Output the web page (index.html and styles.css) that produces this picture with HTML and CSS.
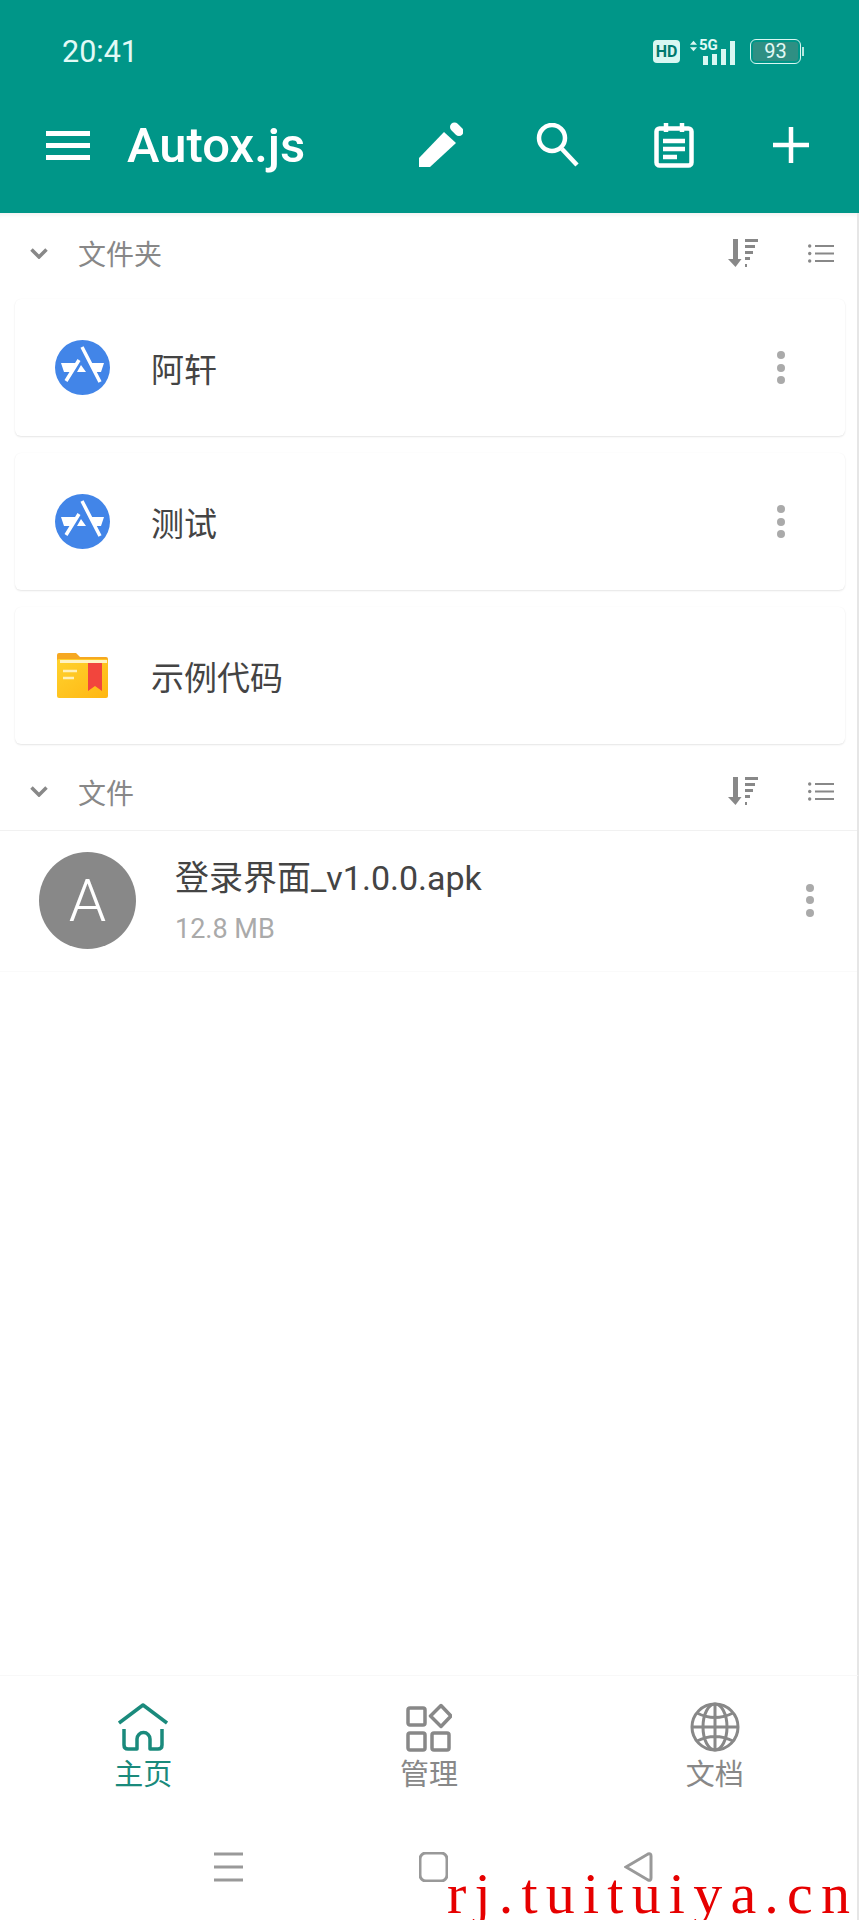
FILE: index.html
```html
<!DOCTYPE html>
<html lang="zh-CN">
<head>
  <meta charset="UTF-8" />
  <title>Autox.js</title>
  <link rel="stylesheet" href="styles.css">
</head>
<body>
  <div class="app">
    <header class="appbar">
      <div class="statusbar">
        <span class="clock">20:41</span>
        <div class="status-icons">
          <span class="hd">HD</span>
          <span class="signal">
            <svg class="updown" viewBox="0 0 8 12"><path d="M4 0 8 4.5H0zM4 12 0 7.5h8z"/></svg>
            <span class="five-g">5G</span>
            <span class="bars"><i class="b1"></i><i class="b2"></i><i class="b3"></i><i class="b4"></i></span>
          </span>
          <span class="battery"><span class="battery-level">93</span></span>
          <span class="battery-tip"></span>
        </div>
      </div>
      <div class="toolbar">
        <svg class="menu-icon" viewBox="0 0 44 29"><path d="M0 2.5h44M0 14.5h44M0 26.500h44"/></svg>
        <h1 class="title">Autox.js</h1>
        <div class="actions">
          <button class="action">
            <svg width="44" height="46" viewBox="0 0 44 46"><path class="fill" d="M0 36 25 10 37 21 11 45H0z"/><path class="cap" d="M35.500 5 40 9.500"/></svg>
          </button>
          <button class="action">
            <svg width="44" height="44" viewBox="0 0 44 44"><circle cx="16" cy="15" r="13"/><path d="M26 26 41 42"/></svg>
          </button>
          <button class="action">
            <svg width="40" height="46" viewBox="0 0 40 46"><rect x="2.500" y="6.500" width="35" height="37" rx="3"/><path d="M12 1v9M28 1v9M9 19h22M9 27h22M9 35h14"/></svg>
          </button>
          <button class="action">
            <svg width="36" height="36" viewBox="0 0 36 36"><path d="M18 0v36M0 18h36"/></svg>
          </button>
        </div>
      </div>
    </header>

    <main class="content">
      <div class="section-head">
        <svg class="chevron" viewBox="0 0 18 11"><path d="M1.500 1.500 9 9l7.500-7.500"/></svg>
        <span class="section-name">文件夹</span>
        <svg class="sort-icon" viewBox="0 0 30 29"><path d="M5 0h5v20h3.500L7.500 28 0 20h5z"/><path d="M17 1.500h13M17 7.500h10M17 13.500h8M17 19.500h5M17 26.500h2"/></svg>
        <svg class="list-icon" viewBox="0 0 26 19"><circle cx="1.700" cy="2" r="1.700"/><circle cx="1.700" cy="9.500" r="1.700"/><circle cx="1.700" cy="17" r="1.700"/><path d="M7 2h19M7 9.500h19M7 17h19"/></svg>
      </div>

      <div class="cards">
        <div class="card">
          <svg class="card-icon" viewBox="0 0 55 55">
            <circle class="app-disc" cx="27.500" cy="27.500" r="27.500"/>
            <path class="app-band" d="M6 23h15l-5 9H9zM34 23h15l-3 9H39zM26 25l5 7h-9z"/>
            <path class="app-stroke" d="M27 7 45 42M24 20 11 41"/>
          </svg>
          <span class="card-name">阿轩</span>
          <span class="more"><i></i><i></i><i></i></span>
        </div>
        <div class="card">
          <svg class="card-icon" viewBox="0 0 55 55">
            <circle class="app-disc" cx="27.500" cy="27.500" r="27.500"/>
            <path class="app-band" d="M6 23h15l-5 9H9zM34 23h15l-3 9H39zM26 25l5 7h-9z"/>
            <path class="app-stroke" d="M27 7 45 42M24 20 11 41"/>
          </svg>
          <span class="card-name">测试</span>
          <span class="more"><i></i><i></i><i></i></span>
        </div>
        <div class="card">
          <svg class="card-icon" viewBox="0 0 55 55">
            <defs>
              <linearGradient id="folder-body" x1="0" y1="0" x2="1" y2="1">
                <stop offset="0" stop-color="#ffd22e"/>
                <stop offset="1" stop-color="#ffb612"/>
              </linearGradient>
            </defs>
            <path d="M2 7q0-2 2-2h17l4 4h26q2 0 2 2v8H2z" fill="#f6a821"/>
            <rect x="2" y="11" width="51" height="39" rx="2" fill="url(#folder-body)"/>
            <rect x="5" y="12" width="47" height="3" fill="#fff3c4"/>
            <path d="M33 15h14v28l-7-5-7 5z" fill="#f2453d"/>
            <path d="M8 23h14M8 30h11" stroke="#fff0b8" stroke-width="2.500"/>
          </svg>
          <span class="card-name">示例代码</span>
        </div>
      </div>

      <div class="section-head section-head-files">
        <svg class="chevron" viewBox="0 0 18 11"><path d="M1.500 1.500 9 9l7.500-7.500"/></svg>
        <span class="section-name">文件</span>
        <svg class="sort-icon" viewBox="0 0 30 29"><path d="M5 0h5v20h3.500L7.500 28 0 20h5z"/><path d="M17 1.500h13M17 7.500h10M17 13.500h8M17 19.500h5M17 26.500h2"/></svg>
        <svg class="list-icon" viewBox="0 0 26 19"><circle cx="1.700" cy="2" r="1.700"/><circle cx="1.700" cy="9.500" r="1.700"/><circle cx="1.700" cy="17" r="1.700"/><path d="M7 2h19M7 9.500h19M7 17h19"/></svg>
      </div>

      <div class="file-row">
        <div class="avatar">A</div>
        <div class="file-info">
          <div class="file-name">登录界面_v1.0.0.apk</div>
          <div class="file-size">12.8 MB</div>
        </div>
        <span class="more"><i></i><i></i><i></i></span>
      </div>
    </main>

    <nav class="tabs">
      <div class="tab tab-active">
        <svg class="tab-icon" width="50" height="48" viewBox="0 0 50 48"><path d="M1 20 25 2l24 18M6 26v16q0 4 4 4h9V36a6.500 6.500 0 0 1 13 0v10h8q4 0 4-4V26"/></svg>
        <span class="tab-label">主页</span>
      </div>
      <div class="tab">
        <svg class="tab-icon" width="46" height="48" viewBox="0 0 46 48"><rect x="2" y="5" width="17" height="17" rx="2"/><rect x="2" y="30" width="17" height="17" rx="2"/><rect x="26" y="30" width="17" height="17" rx="2"/><path d="M35 2.500 45 13 35 23.500 24.500 13z"/></svg>
        <span class="tab-label">管理</span>
      </div>
      <div class="tab">
        <svg class="tab-icon globe" width="50" height="50" viewBox="0 0 50 50"><circle cx="25" cy="25" r="23"/><ellipse cx="25" cy="25" rx="12" ry="23"/><path d="M25 2v46M2 25h46M7 11q18 9 36 0M7 39q18-9 36 0"/></svg>
        <span class="tab-label">文档</span>
      </div>
    </nav>

    <div class="navkeys">
      <svg class="key" width="29" height="30" viewBox="0 0 29 30"><path d="M0 2h29M0 15h29M0 28h29"/></svg>
      <svg class="key" width="29" height="30" viewBox="0 0 29 30"><rect x="1" y="1" width="27" height="28" rx="6"/></svg>
      <svg class="key" width="29" height="30" viewBox="0 0 29 30"><path d="M2 15 24 2q3-1 3 2v22q0 3-3 2z"/></svg>
    </div>

    <div class="watermark">rj.tuituiya.cn</div>
  </div>
</body>
</html>
```

FILE: styles.css
```css
*, *::before, *::after {
  box-sizing: border-box;
}

html, body {
  margin: 0;
  padding: 0;
  background: #fff;
}

.app {
  position: relative;
  display: flex;
  flex-direction: column;
  width: 859px;
  height: 1920px;
  overflow: hidden;
  font-family: Roboto, "Noto Sans CJK SC", sans-serif;
  color: #444;
}

/* top bar */
.appbar {
  background: #009688;
  height: 213px;
  color: #fff;
}

.statusbar {
  display: flex;
  align-items: center;
  justify-content: space-between;
  height: 103px;
  padding: 0 55px 0 62px;
  color: #e2faf6;
}

.clock {
  font-size: 30.500px;
}

.status-icons {
  display: flex;
  align-items: center;
}

.hd {
  width: 27px;
  height: 23px;
  border-radius: 4px;
  background: #d9f7f2;
  color: #00796e;
  font-size: 16px;
  font-weight: 700;
  line-height: 23px;
  text-align: center;
}

.signal {
  position: relative;
  display: block;
  width: 48px;
  height: 26px;
  margin: 0 12px 0 10px;
}

.updown {
  position: absolute;
  left: 0;
  top: 1px;
  width: 7px;
  height: 12px;
  fill: #d9f7f2;
}

.five-g {
  position: absolute;
  left: 9px;
  top: -1px;
  font-size: 15px;
  font-weight: 700;
  line-height: 14px;
}

.bars {
  position: absolute;
  left: 13px;
  bottom: 0;
  display: flex;
  align-items: flex-end;
  gap: 4px;
}

.bars i {
  display: block;
  width: 5px;
  background: #d9f7f2;
}

.bars .b1 { height: 9px; }
.bars .b2 { height: 11px; }
.bars .b3 { height: 16px; }
.bars .b4 { height: 24px; }

.battery {
  display: block;
  width: 51px;
  height: 25px;
  padding: 2px;
  border: 1.500px solid #d9f7f2;
  border-radius: 6px;
}

.battery-level {
  display: block;
  height: 100%;
  border-radius: 3px;
  background: #2f8f83;
  font-size: 20px;
  line-height: 18px;
  text-align: center;
}

.battery-tip {
  width: 2px;
  height: 9px;
  margin-left: 1px;
  background: #b5e6df;
}

.toolbar {
  display: flex;
  align-items: center;
  height: 84px;
  padding: 0 10px 0 46px;
  margin-bottom: 26px;
}

.menu-icon {
  width: 44px;
  height: 29px;
  stroke: #fff;
  stroke-width: 5;
}

.title {
  margin: 0 0 0 37px;
  font-size: 49px;
  font-weight: 500;
  line-height: 1;
}

.actions {
  display: flex;
  margin-left: auto;
}

.action {
  display: flex;
  align-items: center;
  justify-content: center;
  width: 116.500px;
  height: 60px;
  padding: 0;
  border: 0;
  background: none;
}

.action svg {
  fill: none;
  stroke: #fff;
  stroke-width: 4.500;
}

.action svg .fill {
  fill: #fff;
  stroke: none;
}

.action svg .cap {
  stroke-width: 9;
  stroke-linecap: round;
}

/* list */
.content {
  flex: 1;
  border-right: 2px solid #e6e6e6;
  box-shadow: inset 0 5px 4px -3px rgba(0, 0, 0, 0.06);
}

.section-head {
  display: flex;
  align-items: center;
  height: 80px;
  padding: 0 23px 0 30px;
  margin-bottom: 6px;
  color: #888;
}

.section-head-files {
  height: 78px;
  margin: 9px 0 0;
  border-bottom: 1px solid #f1f1f1;
}

.chevron {
  width: 18px;
  height: 11px;
  fill: none;
  stroke: #888;
  stroke-width: 3.500;
}

.section-name {
  margin-left: 30px;
  font-size: 28px;
}

.sort-icon {
  width: 30px;
  height: 29px;
  margin-left: auto;
  fill: #888;
  stroke: #888;
  stroke-width: 0;
}

.sort-icon path + path {
  fill: none;
  stroke-width: 3;
}

.list-icon {
  width: 26px;
  height: 19px;
  margin-left: 50px;
  fill: #888;
  stroke: #888;
  stroke-width: 0;
}

.list-icon path {
  fill: none;
  stroke-width: 2;
}

.cards {
  display: flex;
  flex-direction: column;
  gap: 17px;
  padding: 0 12px 0 15px;
}

.card {
  display: flex;
  align-items: center;
  height: 137px;
  padding: 0 60px 0 40px;
  border-radius: 6px;
  background: #fff;
  box-shadow: 0 1px 2px rgba(0, 0, 0, 0.1), 0 0 1px rgba(0, 0, 0, 0.04);
}

.card-icon {
  flex: none;
  width: 55px;
  height: 55px;
}

.app-disc {
  fill: #4285e8;
}

.app-band {
  fill: #fff;
}

.app-stroke {
  fill: none;
  stroke: #fff;
  stroke-width: 3.500;
}

.card-name {
  margin-left: 41px;
  font-size: 33px;
}

.more {
  display: flex;
  flex-direction: column;
  gap: 4.500px;
  margin-left: auto;
}

.more i {
  display: block;
  width: 8px;
  height: 8px;
  border-radius: 50%;
  background: #aaa;
}

.file-row {
  display: flex;
  align-items: center;
  height: 141px;
  padding: 0 43px 2px 39px;
  border-bottom: 1px solid #fafafa;
}

.avatar {
  flex: none;
  width: 97px;
  height: 97px;
  border-radius: 50%;
  background: #888;
  color: #fff;
  font-size: 60px;
  font-weight: 300;
  line-height: 97px;
  text-align: center;
}

.file-info {
  margin-left: 39px;
}

.file-name {
  font-size: 34px;
  line-height: 44px;
}

.file-size {
  margin-top: 13px;
  color: #aaa;
  font-size: 27px;
  line-height: 32px;
}

/* bottom tabs */
.tabs {
  display: flex;
  gap: 1px;
  height: 155px;
  padding: 26px 0 0 1px;
  border-top: 1px solid #f8f8f8;
  border-right: 2px solid #e6e6e6;
}

.tab {
  display: flex;
  flex: 1;
  flex-direction: column;
  align-items: center;
  color: #888;
  font-size: 29px;
  line-height: 40px;
}

.tab-label {
  margin-top: 3px;
}

.tab-icon {
  height: 50px;
  fill: none;
  stroke: #888;
  stroke-width: 3.500;
  stroke-linejoin: round;
}

.globe {
  stroke-width: 3;
}

.tab-active {
  color: #1a8a7c;
}

.tab-active .tab-icon {
  stroke: #1a8a7c;
}

.navkeys {
  display: flex;
  align-items: flex-start;
  justify-content: center;
  gap: 176px;
  height: 90px;
  padding: 22px 0 0 9px;
  border-right: 2px solid #e6e6e6;
}

.key {
  fill: none;
  stroke: #999;
  stroke-width: 3;
}

.watermark {
  position: absolute;
  left: 447px;
  bottom: 0;
  color: #e60000;
  font-family: "Liberation Serif", serif;
  font-size: 58px;
  letter-spacing: 8.200px;
  line-height: 52px;
  white-space: nowrap;
}
```
